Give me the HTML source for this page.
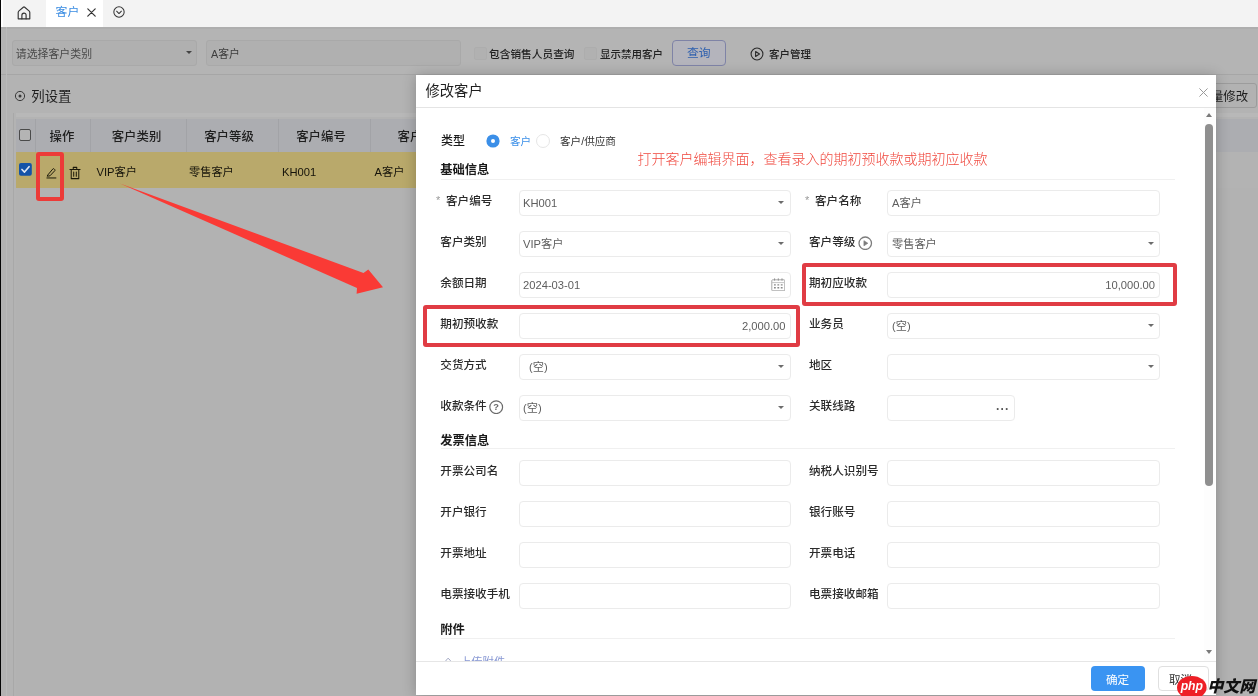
<!DOCTYPE html>
<html lang="zh-CN">
<head>
<meta charset="utf-8">
<title>修改客户</title>
<style>
*{box-sizing:border-box;margin:0;padding:0}
html,body{width:1258px;height:696px;overflow:hidden}
body{position:relative;background:#b3b3b3;font-family:"Liberation Sans","Noto Sans CJK SC",sans-serif;font-size:11.5px;color:#222;line-height:1}
.a{position:absolute;white-space:nowrap}
.t{position:absolute;white-space:nowrap;transform:translateY(-50%);line-height:1}
/* ---------- top tab bar (not dimmed) ---------- */
#topbar{left:0;top:0;width:1258px;height:27px;background:#f3f3f3}
#tab{left:46px;top:0;width:57px;height:27px;background:#fff}
/* ---------- dimmed page ---------- */
#toolbar{left:0;top:27px;width:1258px;height:48px;background:#b4b4b4;border-bottom:1px solid #a6a6a6}
.dimbox{background:#b0b0b0;border:1px solid #a9a9a9;border-radius:3px}
#listarea{left:0;top:76px;width:1258px;height:620px;background:#b3b3b3}
#thead{left:16px;top:119px;width:1242px;height:33px;background:#acadb1}
#trow{left:16px;top:152px;width:1200px;height:36.3px;background:#b9a96b}
.vsep{width:1px;background:#a2a3a7;top:119px;height:33px}
.th{font-size:12.4px;font-weight:500;color:#1f1f1f;top:137.3px;text-align:center;transform:translate(-50%,-50%)}
.td{font-size:11.2px;color:#15130a;top:173px}
/* ---------- modal ---------- */
#modal{left:416px;top:75px;width:800px;height:620px;background:#fff;box-shadow:0 1px 13px rgba(0,0,0,.24)}
#mhead{left:0;top:0;width:800px;height:33px;border-bottom:1px solid #e4e4e4}
#mfoot{left:0;top:586px;width:800px;height:34px;border-top:1px solid #e6e6e6;background:#fff}
.lb{font-size:11.6px;font-weight:500;color:#2b2b2b}
.sec{font-size:12.3px;font-weight:bold;color:#1a1a1a}
.hr{height:1px;background:#f0f0f0;left:441px;width:734px}
.in{height:26px;border:1px solid #ebebeb;border-radius:4px;background:#fff}
.v{font-size:11.2px;color:#5e5e5e}
.caret{width:0;height:0;border-left:3.2px solid transparent;border-right:3.2px solid transparent;border-top:3.6px solid #6c6c6c}
.redbox{border:4.3px solid #e03c44;border-radius:3px}
</style>
</head>
<body>
<div id="root" style="position:absolute;left:0;top:0;width:1258px;height:696px;will-change:transform">
<!-- SECTION: topbar -->
<div class="a" id="topbar"></div>
<div class="a" id="tab"></div>
<svg class="a" style="left:16.8px;top:6.2px" width="14" height="14" viewBox="0 0 14 14" fill="none" stroke="#333" stroke-width="1.15" stroke-linejoin="round" stroke-linecap="round"><path d="M1.2 6.6 Q1.2 5.6 2 4.9 L6.3 1.2 Q7 0.7 7.7 1.2 L12 4.9 Q12.8 5.6 12.8 6.6 V12.8 H1.2 Z"/><path d="M4.9 12.8 V9.2 a2.1 2.1 0 0 1 4.2 0 V12.8"/></svg>
<div class="t" style="left:55.5px;top:13.3px;font-size:11.9px;color:#3a8ce2">客户</div>
<svg class="a" style="left:87px;top:8px" width="9" height="9" viewBox="0 0 9 9" stroke="#333" stroke-width="1.2" stroke-linecap="round"><path d="M0.8 0.8 L8.2 8.2 M8.2 0.8 L0.8 8.2"/></svg>
<svg class="a" style="left:112.5px;top:6.2px" width="12" height="12" viewBox="0 0 13 13" fill="none" stroke="#333" stroke-width="1.1" stroke-linecap="round" stroke-linejoin="round"><circle cx="6.5" cy="6.5" r="5.6"/><path d="M3.9 5.6 L6.5 8.2 L9.1 5.6"/></svg>
<!-- SECTION: page -->
<div class="a" id="listarea"></div>
<div class="a" id="toolbar"></div>
<div class="a" style="left:0;top:27px;width:1258px;height:2px;background:#aeaeae"></div>
<div class="a dimbox" style="left:12px;top:40px;width:185px;height:26px"></div>
<div class="t" style="left:15.8px;top:54px;font-size:10.9px;color:#4a4a4a">请选择客户类别</div>
<div class="a caret" style="left:186px;top:51px;border-top-color:#444"></div>
<div class="a dimbox" style="left:206px;top:40px;width:255px;height:26px"></div>
<div class="t" style="left:211px;top:53.5px;font-size:10.8px;color:#3d3d3d">A客户</div>
<div class="a" style="left:474px;top:47px;width:13px;height:13px;background:#b1b1b1;border:1px solid #adadad;border-radius:2px"></div>
<div class="t" style="left:489px;top:54px;font-size:10.7px;font-weight:500;color:#222">包含销售人员查询</div>
<div class="a" style="left:584px;top:47px;width:13px;height:13px;background:#b1b1b1;border:1px solid #adadad;border-radius:2px"></div>
<div class="t" style="left:600px;top:54px;font-size:10.5px;font-weight:500;color:#222">显示禁用客户</div>
<div class="a" style="left:672px;top:40px;width:54px;height:26px;background:#b4b4bc;border:1px solid #7f83a6;border-radius:4px"></div>
<div class="t" style="left:687px;top:53.5px;font-size:11.8px;color:#2d5fae">查询</div>
<svg class="a" style="left:749.5px;top:46.5px" width="14" height="14" viewBox="0 0 13 13" fill="none" stroke="#2a2a2a" stroke-width="1"><circle cx="6.5" cy="6.5" r="5.5"/><path d="M5.2 4.2 L8.8 6.5 L5.2 8.8 Z" stroke-linejoin="round"/></svg>
<div class="t" style="left:769px;top:53.5px;font-size:10.5px;font-weight:500;color:#222">客户管理</div>
<!-- list -->
<svg class="a" style="left:14px;top:89.5px" width="12" height="12" viewBox="0 0 12 12" fill="none" stroke="#3a3a3a" stroke-width="1"><circle cx="6" cy="6" r="4.6"/><circle cx="6" cy="6" r="1.5" fill="#3a3a3a" stroke="none"/></svg>
<div class="t" style="left:31.3px;top:96.7px;font-size:13.4px;color:#1e1e1e">列设置</div>
<div class="a" style="left:1191px;top:83px;width:66px;height:25px;background:#b2b2b2;border:1px solid #9c9c9c;border-radius:3px"></div>
<div class="t" style="left:1198.5px;top:97px;font-size:12.4px;color:#1e1e1e">批量修改</div>
<div class="a" style="left:16px;top:113px;width:1242px;height:4px;background:#b8b8b8"></div>
<div class="a" id="thead"></div>
<div class="a" id="trow"></div>
<div class="a" style="left:16px;top:188.3px;width:1242px;height:508px;background:#b2b2b2"></div>
<div class="a vsep" style="left:35px"></div><div class="a vsep" style="left:90px"></div><div class="a vsep" style="left:186px"></div><div class="a vsep" style="left:278px"></div><div class="a vsep" style="left:370px"></div>
<div class="a" style="left:19px;top:129px;width:12px;height:12px;border:1px solid #4a4a4a;border-radius:2px;background:#b4b4b4"></div>
<div class="a th" style="left:62px">操作</div>
<div class="a th" style="left:136.5px">客户类别</div>
<div class="a th" style="left:229px">客户等级</div>
<div class="a th" style="left:321px">客户编号</div>
<div class="a th" style="left:422.3px">客户名称</div>
<svg class="a" style="left:19.2px;top:163.2px" width="12.8" height="12.8" viewBox="0 0 13 13"><rect x="0" y="0" width="13" height="13" rx="2" fill="#1553a8"/><path d="M3 6.6 L5.6 9.2 L10.2 3.8" fill="none" stroke="#dfe6f2" stroke-width="1.7" stroke-linecap="round" stroke-linejoin="round"/></svg>
<svg class="a" style="left:46px;top:167.4px" width="10.8" height="11.7" viewBox="0 0 12 13" fill="none" stroke="#1b1808" stroke-width="1.1" stroke-linecap="round" stroke-linejoin="round"><path d="M2.2 8.6 L7.6 2.2 a1 1 0 0 1 1.5 0 l0.6 0.6 a1 1 0 0 1 0 1.4 L4.4 9.8 L1.8 10.2 Z"/><path d="M1 12.2 H11"/></svg>
<svg class="a" style="left:68.5px;top:166px" width="12" height="14" viewBox="0 0 13 15" fill="none" stroke="#1b1808" stroke-width="1.1" stroke-linecap="round" stroke-linejoin="round"><path d="M1 3.6 H12 M4.6 3.4 V1.4 H8.4 V3.4 M2.4 3.8 V13.6 H10.6 V3.8 M5.1 6.4 V11 M7.9 6.4 V11"/></svg>
<div class="t td" style="left:96.5px">VIP客户</div>
<div class="t td" style="left:189px">零售客户</div>
<div class="t td" style="left:282px">KH001</div>
<div class="t td" style="left:374.5px">A客户</div>
<div class="a" style="left:1px;top:0;width:2px;height:27px;background:#fdfdfd"></div>
<div class="a" style="left:0;top:0;width:1px;height:696px;background:#060606"></div>
<div class="a" style="left:13px;top:113px;width:1px;height:583px;background:#a8a8a8"></div>
<div class="a" style="left:6px;top:27px;width:1px;height:669px;background:#bababa"></div>
<!-- SECTION: modal -->
<div class="a" id="modal"><div class="a" id="mhead"></div><div class="a" id="mfoot"></div></div>
<div class="t" style="left:425.5px;top:91.2px;font-size:14.3px;color:#1f1f1f">修改客户</div>
<svg class="a" style="left:1198.5px;top:87.5px" width="9" height="9" viewBox="0 0 9 9" stroke="#9a9a9a" stroke-width="1" stroke-linecap="round"><path d="M0.7 0.7 L8.3 8.3 M8.3 0.7 L0.7 8.3"/></svg>
<div class="t" style="left:441px;top:140.5px;font-size:12px;font-weight:500;color:#1a1a1a">类型</div>
<svg class="a" style="left:486px;top:133.5px" width="14" height="14" viewBox="0 0 14 14"><circle cx="7" cy="7" r="6.6" fill="#3b8fe8"/><circle cx="7" cy="7" r="2" fill="#fff"/></svg>
<div class="t" style="left:510px;top:141px;font-size:10.6px;color:#3b8fe8">客户</div>
<div class="a" style="left:536px;top:133.5px;width:14px;height:14px;border:1px solid #e6e6e6;border-radius:50%;background:#fff"></div>
<div class="t" style="left:560px;top:141px;font-size:10.6px;color:#333">客户/供应商</div>
<div class="t sec" style="left:440.2px;top:169.5px">基础信息</div>
<div class="a hr" style="top:178.5px"></div>
<div class="t" style="left:436px;top:200px;font-size:11px;color:#999">*</div>
<div class="t lb" style="left:446px;top:201.3px">客户编号</div>
<div class="a in" style="left:519px;top:190px;width:271.5px"></div>
<div class="t v" style="left:523px;top:203.5px">KH001</div>
<div class="a caret" style="left:778px;top:201px"></div>
<div class="t" style="left:805px;top:200px;font-size:11px;color:#999">*</div>
<div class="t lb" style="left:815px;top:201.3px">客户名称</div>
<div class="a in" style="left:887px;top:190px;width:273px"></div>
<div class="t v" style="left:892px;top:203.5px">A客户</div>
<div class="t lb" style="left:440.3px;top:242.2px">客户类别</div>
<div class="a in" style="left:519px;top:231px;width:271.5px"></div>
<div class="t v" style="left:523px;top:244.5px">VIP客户</div>
<div class="a caret" style="left:778px;top:242px"></div>
<div class="t lb" style="left:809px;top:242.2px">客户等级</div>
<div class="a in" style="left:887px;top:231px;width:273px"></div>
<div class="t v" style="left:892px;top:244.5px">零售客户</div>
<div class="a caret" style="left:1148px;top:242px"></div>
<svg class="a" style="left:858px;top:235.6px" width="14.5" height="14.5" viewBox="0 0 13 13" fill="none" stroke="#7c7c7c" stroke-width="1.15"><circle cx="6.5" cy="6.5" r="5.6"/><path d="M5.3 4.2 L8.8 6.5 L5.3 8.8 Z" fill="#7c7c7c" stroke-linejoin="round" stroke-width="0.6"/></svg>
<div class="t lb" style="left:440.3px;top:283.2px">余额日期</div>
<div class="a in" style="left:519px;top:272px;width:271.5px"></div>
<div class="t v" style="left:523px;top:285.5px">2024-03-01</div>
<svg class="a" style="left:770.8px;top:277.6px" width="14.6" height="13.6" viewBox="0 0 14.6 13.6" fill="none" stroke="#a9a9a9" stroke-width="1"><rect x="0.8" y="1.8" width="13" height="11" rx="0.8"/><path d="M0.8 4.6 H13.8" stroke="#c4c4c4"/><path d="M3.6 0.4 V2.6 M7.3 0.4 V2.6 M11 0.4 V2.6" stroke="#8e8e8e"/><path d="M3 6.9 H4.8 M6.4 6.9 H8.2 M9.8 6.9 H11.6 M3 9.7 H4.8 M6.4 9.7 H8.2 M9.8 9.7 H11.6" stroke="#8a8a8a" stroke-width="1.4"/></svg>
<div class="t lb" style="left:809px;top:283.2px">期初应收款</div>
<div class="a in" style="left:887px;top:272px;width:273px"></div>
<div class="t v" style="right:103px;top:285.5px">10,000.00</div>
<div class="t lb" style="left:440.3px;top:324.2px">期初预收款</div>
<div class="a in" style="left:519px;top:313px;width:271.5px"></div>
<div class="t v" style="right:472.5px;top:326.5px">2,000.00</div>
<div class="t lb" style="left:809px;top:324.2px">业务员</div>
<div class="a in" style="left:887px;top:313px;width:273px"></div>
<div class="t v" style="left:892px;top:326.5px">(空)</div>
<div class="a caret" style="left:1148px;top:324px"></div>
<div class="t lb" style="left:440.3px;top:365.2px">交货方式</div>
<div class="a in" style="left:519px;top:354px;width:271.5px"></div>
<div class="t v" style="left:529px;top:367.5px">(空)</div>
<div class="a caret" style="left:778px;top:365px"></div>
<div class="t lb" style="left:809px;top:365.2px">地区</div>
<div class="a in" style="left:887px;top:354px;width:273px"></div>
<div class="a caret" style="left:1148px;top:365px"></div>
<div class="t lb" style="left:440.3px;top:406.2px">收款条件</div>
<div class="a in" style="left:519px;top:395px;width:271.5px"></div>
<div class="t v" style="left:523px;top:408.5px">(空)</div>
<div class="a caret" style="left:778px;top:406px"></div>
<svg class="a" style="left:489.4px;top:399.9px" width="14.4" height="14.4" viewBox="0 0 14 14" fill="none" stroke="#6a6a6a" stroke-width="1.15"><circle cx="7" cy="7" r="6.2"/><text x="7" y="10.2" font-size="9" font-weight="bold" font-family="Liberation Sans,sans-serif" text-anchor="middle" fill="#666" stroke="none">?</text></svg>
<div class="t lb" style="left:809px;top:406.2px">关联线路</div>
<div class="a in" style="left:887px;top:395px;width:128px"></div>
<div class="t" style="left:996px;top:408.5px;font-size:12px;font-weight:bold;color:#555;letter-spacing:0.5px">···</div>
<div class="t sec" style="left:440.2px;top:440.5px">发票信息</div>
<div class="a hr" style="top:448.4px"></div>
<div class="t lb" style="left:440.3px;top:471.2px">开票公司名</div>
<div class="a in" style="left:519px;top:460px;width:271.5px"></div>
<div class="t lb" style="left:809px;top:471.2px">纳税人识别号</div>
<div class="a in" style="left:887px;top:460px;width:273px"></div>
<div class="t lb" style="left:440.3px;top:512.2px">开户银行</div>
<div class="a in" style="left:519px;top:501px;width:271.5px"></div>
<div class="t lb" style="left:809px;top:512.2px">银行账号</div>
<div class="a in" style="left:887px;top:501px;width:273px"></div>
<div class="t lb" style="left:440.3px;top:553.2px">开票地址</div>
<div class="a in" style="left:519px;top:542px;width:271.5px"></div>
<div class="t lb" style="left:809px;top:553.2px">开票电话</div>
<div class="a in" style="left:887px;top:542px;width:273px"></div>
<div class="t lb" style="left:440.3px;top:594.2px">电票接收手机</div>
<div class="a in" style="left:519px;top:583px;width:271.5px"></div>
<div class="t lb" style="left:809px;top:594.2px">电票接收邮箱</div>
<div class="a in" style="left:887px;top:583px;width:273px"></div>
<div class="t sec" style="left:440.2px;top:630px">附件</div>
<div class="a hr" style="top:638px"></div>
<div class="a" style="left:436px;top:650px;width:120px;height:11px;overflow:hidden"><svg class="a" style="left:5px;top:5.5px" width="12" height="12" viewBox="0 0 12 12" fill="none" stroke="#a3a9c4" stroke-width="1"><path d="M2 8 L7 2.2 L9.4 4.4 L4.4 10 L1.6 10.4 Z"/></svg><div class="a" style="left:24px;top:6.5px;font-size:11.3px;color:#8898d4">上传附件</div></div>
<div class="a" style="left:1204px;top:108px;width:11px;height:553px;background:#fdfdfd"></div>
<div class="a" style="left:1205.5px;top:113px;width:0;height:0;border-left:3.5px solid transparent;border-right:3.5px solid transparent;border-bottom:4px solid #7a7a7a"></div>
<div class="a" style="left:1205.3px;top:124px;width:7.5px;height:362px;background:#8f8f8f;border-radius:4px"></div>
<div class="a" style="left:1205.5px;top:650px;width:0;height:0;border-left:3.5px solid transparent;border-right:3.5px solid transparent;border-top:4px solid #7a7a7a"></div>
<div class="a" style="left:1091px;top:666px;width:54px;height:25px;background:#3a94f2;border-radius:4px"></div>
<div class="t" style="left:1106px;top:679.5px;font-size:11.6px;color:#fff">确定</div>
<div class="a" style="left:1158px;top:666px;width:51px;height:25px;background:#fff;border:1px solid #e0e0e0;border-radius:4px"></div>
<div class="t" style="left:1169px;top:679.5px;font-size:11.6px;color:#333">取消</div>
<!-- SECTION: annotations -->
<div class="a redbox" style="left:36px;top:152.3px;width:28.3px;height:49.2px;border-width:4.3px;border-color:#ec3b38"></div>
<div class="a redbox" style="left:802px;top:263px;width:375px;height:43px"></div>
<div class="a redbox" style="left:423px;top:304.5px;width:377px;height:42.5px"></div>
<svg class="a" style="left:0;top:0" width="1258" height="696" viewBox="0 0 1258 696"><polygon points="120,183.5 363.5,273 368.3,269.6 383,287.2 356.6,293.8 357,288" fill="#fa3a35"/></svg>
<div class="t" style="left:637.5px;top:159.3px;font-size:14px;color:#f0483e;font-weight:300">打开客户编辑界面，查看录入的期初预收款或期初应收款</div>
<!-- watermark -->
<svg class="a" style="left:1170px;top:670px" width="88" height="26" viewBox="0 0 88 26"><ellipse cx="21.8" cy="17.5" rx="14.8" ry="11.5" fill="#ee1f26"/><text x="21.8" y="20.3" text-anchor="middle" font-family="Liberation Sans,sans-serif" font-size="12.2" font-weight="bold" font-style="italic" fill="#fff">php</text><text x="37.2" y="22" font-family="Liberation Sans,Noto Sans CJK SC,sans-serif" font-size="16" font-weight="900" font-style="italic" fill="#111">中文网</text></svg>
</div>
</body>
</html>
